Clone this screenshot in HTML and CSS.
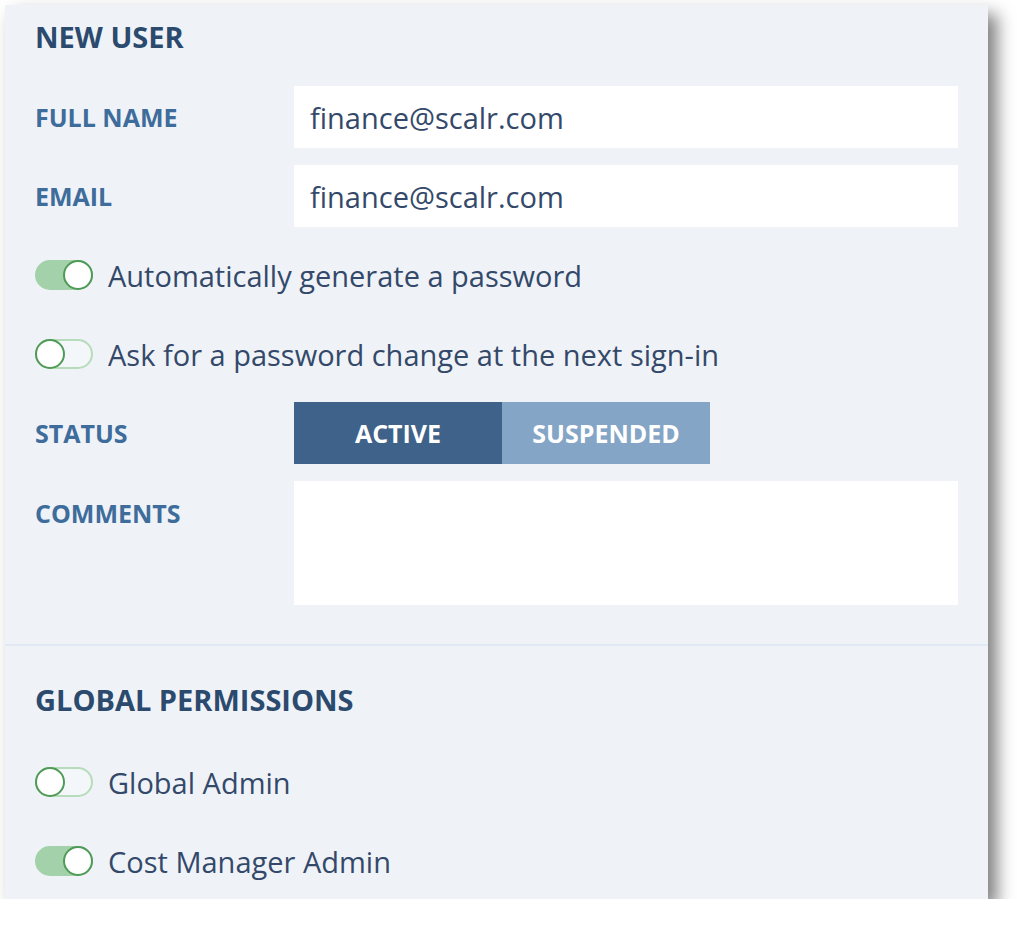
FILE: index.html
```html
<!DOCTYPE html>
<html>
<head>
<meta charset="utf-8">
<link rel="stylesheet" href="styles.css">
</head>
<body>
<div class="panel">
  <section class="section first">
    <h2 class="title">NEW USER</h2>
    <div class="form">
      <label class="label">FULL NAME</label>
      <div class="input">finance@scalr.com</div>
      <label class="label">EMAIL</label>
      <div class="input">finance@scalr.com</div>
      <div class="toggle-row full">
        <span class="toggle on"><span class="knob"></span></span>
        <span class="toggle-text">Automatically generate a password</span>
      </div>
      <div class="toggle-row full">
        <span class="toggle"><span class="knob"></span></span>
        <span class="toggle-text">Ask for a password change at the next sign-in</span>
      </div>
      <label class="label">STATUS</label>
      <div class="segmented">
        <span class="seg active">ACTIVE</span>
        <span class="seg">SUSPENDED</span>
      </div>
      <label class="label top">COMMENTS</label>
      <div class="textarea"></div>
    </div>
  </section>
  <section class="section second">
    <h2 class="title">GLOBAL PERMISSIONS</h2>
    <div class="perms">
      <div class="toggle-row">
        <span class="toggle"><span class="knob"></span></span>
        <span class="toggle-text">Global Admin</span>
      </div>
      <div class="toggle-row">
        <span class="toggle on"><span class="knob"></span></span>
        <span class="toggle-text">Cost Manager Admin</span>
      </div>
    </div>
  </section>
</div>
</body>
</html>
```

FILE: styles.css
```css
html, body {
  margin: 0;
  padding: 0;
  background: #ffffff;
}
body {
  font-family: "Open Sans", "Noto Sans", sans-serif;
  padding: 5px 0 0 5px;
}
.panel {
  width: 983px;
  height: 894px;
  background: #eff3f8;
  box-shadow: 9px 9px 16px rgba(0, 0, 0, 0.5);
  box-sizing: border-box;
  display: flex;
  flex-direction: column;
}
.section {
  padding: 0 30px;
}
.first {
  padding-top: 13px;
  padding-bottom: 39px;
  border-bottom: 2px solid #e1eaf4;
}
.second {
  padding-top: 35px;
}
.title {
  margin: 0;
  font-size: 29px;
  line-height: 38px;
  font-weight: 700;
  color: #2b4a6e;
}
.form {
  margin-top: 30px;
  display: grid;
  grid-template-columns: 259px 664px;
  grid-auto-rows: minmax(62px, auto);
  row-gap: 17px;
  align-items: center;
}
.label {
  font-size: 25px;
  font-weight: 700;
  color: #3e6c9b;
  line-height: 32px;
}
.label.top {
  align-self: start;
  padding-top: 16px;
}
.input {
  height: 62px;
  background: #ffffff;
  box-sizing: border-box;
  padding: 0 16px;
  display: flex;
  align-items: center;
  font-size: 29px;
  color: #34496a;
}
.textarea {
  background: #ffffff;
  height: 124px;
}
.full {
  grid-column: 1 / 3;
}
.toggle-row {
  display: flex;
  align-items: center;
  height: 62px;
}
.toggle {
  position: relative;
  width: 58px;
  height: 30px;
  box-sizing: border-box;
  border-radius: 15px;
  border: 2px solid #b6dcba;
  background: #f3f7fa;
  flex: none;
}
.toggle.on {
  background: #a3d1a9;
  border-color: #a3d1a9;
}
.knob {
  position: absolute;
  top: -2px;
  left: -2px;
  width: 30px;
  height: 30px;
  box-sizing: border-box;
  border-radius: 50%;
  border: 2px solid #4f9a57;
  background: #ffffff;
}
.toggle.on .knob {
  left: auto;
  right: -2px;
}
.toggle-text {
  margin-left: 15px;
  font-size: 29px;
  color: #34496a;
}
.segmented {
  display: flex;
  height: 62px;
}
.seg {
  width: 208px;
  display: flex;
  align-items: center;
  justify-content: center;
  font-size: 25px;
  font-weight: 700;
  color: #ffffff;
  background: #84a5c5;
}
.seg.active {
  background: #3e6289;
}
.perms {
  margin-top: 32px;
  display: flex;
  flex-direction: column;
  gap: 17px;
}
```
